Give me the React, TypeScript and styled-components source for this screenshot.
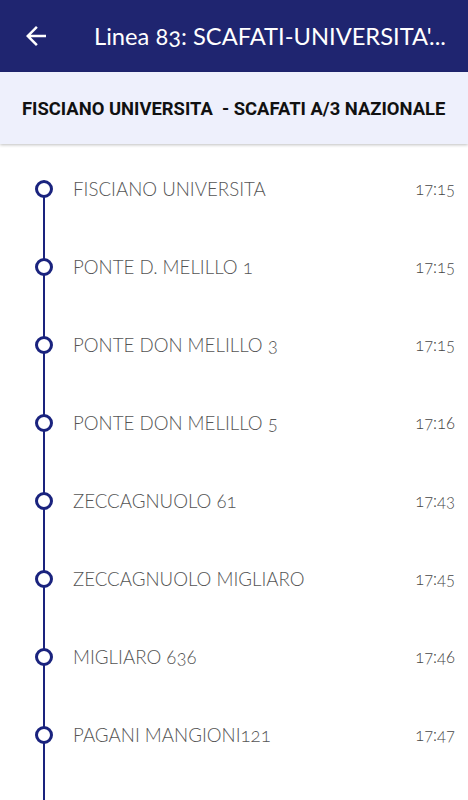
import React from "react";
import styled, { createGlobalStyle } from "styled-components";

const Global = createGlobalStyle`
  html, body {
    margin: 0;
    padding: 0;
    height: 800px;
    overflow: hidden;
    background: #ffffff;
  }
  * { box-sizing: border-box; }
`;

const Page = styled.div`
  width: 468px;
  height: 800px;
  overflow: hidden;
  display: flex;
  flex-direction: column;
  background: #ffffff;
`;

const TopBar = styled.header`
  height: 72px;
  flex: none;
  background: #1f2570;
  display: flex;
  align-items: center;
  padding-left: 21px;
  gap: 43px;
`;

const BackButton = styled.button`
  border: 0;
  background: none;
  padding: 0;
  width: 30px;
  height: 30px;
  flex: none;
  display: flex;
  align-items: center;
  justify-content: center;
  color: #ffffff;
  cursor: pointer;
`;

const Title = styled.h1`
  margin: 0;
  font-family: Lato, "Open Sans", sans-serif;
  font-weight: 400;
  font-size: 23.7px;
  font-feature-settings: "onum" 1;
  color: #ffffff;
  white-space: nowrap;
  overflow: hidden;
`;

const SubHeader = styled.div`
  height: 72px;
  flex: none;
  background: #eef0fc;
  box-shadow: 0 1px 3px rgba(0, 0, 0, 0.25);
  display: flex;
  align-items: center;
  padding-left: 22px;
  position: relative;
  z-index: 1;
`;

const Route = styled.span`
  font-family: Roboto, "Liberation Sans", sans-serif;
  font-weight: 700;
  font-size: 18.4px;
  color: #111111;
  white-space: pre;
`;

const StopList = styled.ul`
  list-style: none;
  margin: 0;
  padding: 6px 0 0 0;
  flex: 1;
  display: flex;
  flex-direction: column;
`;

const StopRow = styled.li`
  height: 78px;
  flex: none;
  display: flex;
  align-items: center;
`;

const Track = styled.div<{ $first: boolean }>`
  width: 73px;
  height: 100%;
  flex: none;
  position: relative;
  display: flex;
  align-items: center;

  &::before {
    content: "";
    position: absolute;
    left: 43px;
    width: 2px;
    top: ${(p) => (p.$first ? "50%" : "0")};
    bottom: 0;
    background: #1a237e;
  }
`;

const Tail = styled.li`
  flex: 1;
  margin-left: 43px;
  width: 2px;
  background: #1a237e;
`;

const Dot = styled.span`
  position: relative;
  margin-left: 35px;
  width: 18px;
  height: 18px;
  border-radius: 50%;
  border: 3px solid #1a237e;
  background: #ffffff;
`;

const StopName = styled.span`
  flex: 1;
  font-family: Lato, "Open Sans", sans-serif;
  font-weight: 300;
  font-size: 18.7px;
  font-feature-settings: "onum" 1;
  color: #555555;
  white-space: nowrap;
`;

const Time = styled.span`
  margin-right: 13px;
  font-family: Lato, "Open Sans", sans-serif;
  font-weight: 300;
  font-size: 16.6px;
  font-feature-settings: "onum" 1;
  color: #444444;
`;

const stops = [
  ["FISCIANO UNIVERSITA", "17:15"],
  ["PONTE D. MELILLO 1", "17:15"],
  ["PONTE DON MELILLO 3", "17:15"],
  ["PONTE DON MELILLO 5", "17:16"],
  ["ZECCAGNUOLO 61", "17:43"],
  ["ZECCAGNUOLO MIGLIARO", "17:45"],
  ["MIGLIARO 636", "17:46"],
  ["PAGANI MANGIONI121", "17:47"],
];

export default function App() {
  return (
    <Page>
      <Global />
      <TopBar>
        <BackButton aria-label="Indietro">
          <svg width="30" height="30" viewBox="0 0 24 24" fill="currentColor">
            <path d="M20 11H7.83l5.59-5.59L12 4l-8 8 8 8 1.41-1.41L7.83 13H20v-2z" />
          </svg>
        </BackButton>
        <Title>Linea 83: SCAFATI-UNIVERSITA'...</Title>
      </TopBar>
      <SubHeader>
        <Route>{"FISCIANO UNIVERSITA  - SCAFATI A/3 NAZIONALE"}</Route>
      </SubHeader>
      <StopList>
        {stops.map(([name, time], i) => (
          <StopRow key={name}>
            <Track $first={i === 0}>
              <Dot />
            </Track>
            <StopName>{name}</StopName>
            <Time>{time}</Time>
          </StopRow>
        ))}
        <Tail aria-hidden />
      </StopList>
    </Page>
  );
}
